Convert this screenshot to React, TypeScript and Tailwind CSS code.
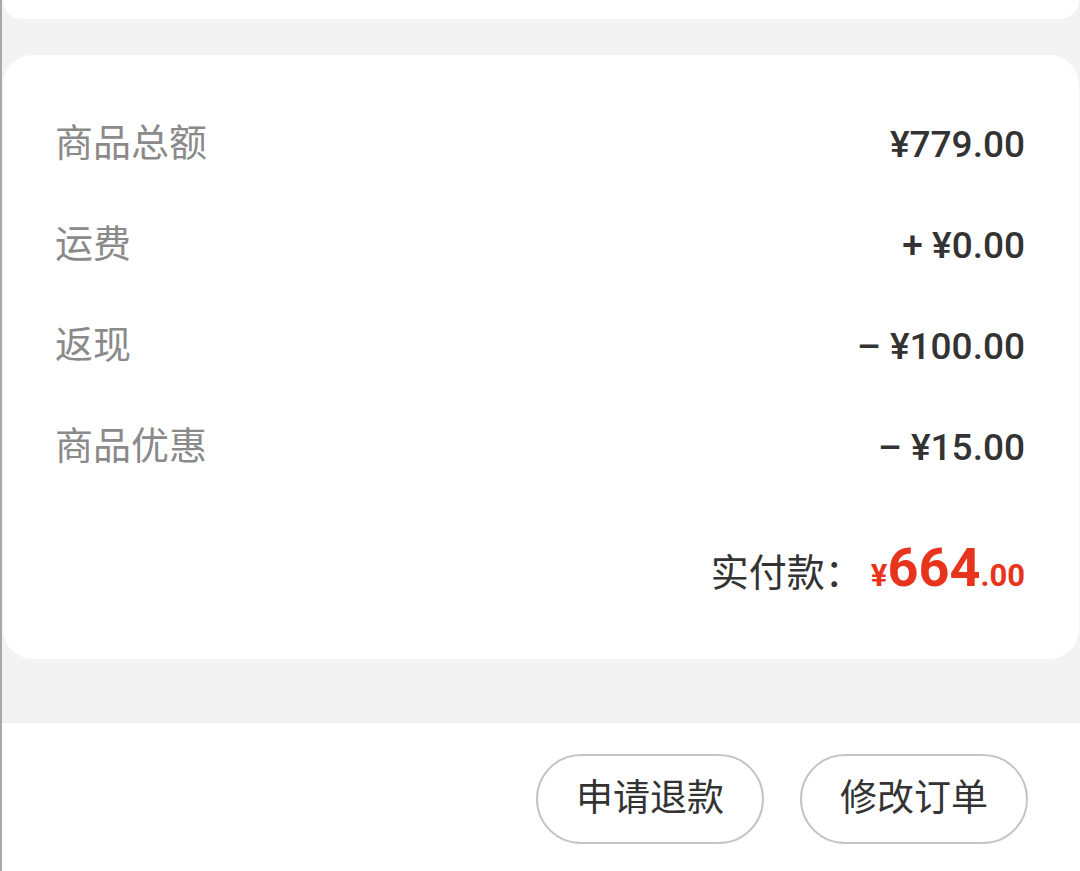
import React from "react";

const rows = [
  { label: "商品总额", value: "¥779.00" },
  { label: "运费", value: "+ ¥0.00" },
  { label: "返现", value: "– ¥100.00" },
  { label: "商品优惠", value: "– ¥15.00" },
];

const font = { fontFamily: "Roboto, 'Noto Sans CJK SC', sans-serif" };

export default function App() {
  return (
    <div
      className="w-[1080px] h-[871px] bg-[#f2f3f2] border-l-2 border-[#a8a8a8] flex flex-col overflow-hidden"
      style={font}
    >
      <div className="h-[19px] mx-[1px] bg-white rounded-b-[30px] shrink-0" />

      <div className="mt-[36px] mx-[1px] h-[604px] bg-white rounded-[30px] pt-[92px] pl-[52px] pr-[54px] flex flex-col shrink-0">
        {rows.map((r) => (
          <div key={r.label} className="h-[101px] flex items-start justify-between">
            <span className="text-[38px] leading-[1] text-[#8a8a8a] -mt-[23px]">{r.label}</span>
            <span className="text-[37px] font-medium leading-[1] text-[#333333] -mt-[21px]">
              {r.value}
            </span>
          </div>
        ))}
        <div className="flex items-baseline justify-end -mt-[10px]">
          <span className="text-[38px] text-[#333333] leading-[1]">实付款：</span>
          <span className="ml-[8px] text-[31px] font-bold text-[#e8341c] leading-[1]">¥</span>
          <span className="text-[54px] font-bold text-[#e8341c] leading-[1]">664</span>
          <span className="text-[31px] font-bold text-[#e8341c] leading-[1]">.00</span>
        </div>
      </div>

      <div className="mt-[63px] flex-1 bg-white border-t border-[#ececec] flex justify-end items-start pt-[31px] pr-[52px] gap-[36px]">
        <button className="w-[228px] h-[90px] rounded-full border-2 border-[#c4c4c4] text-[37px] text-[#333333] bg-white">
          申请退款
        </button>
        <button className="w-[228px] h-[90px] rounded-full border-2 border-[#c4c4c4] text-[37px] text-[#333333] bg-white">
          修改订单
        </button>
      </div>
    </div>
  );
}
